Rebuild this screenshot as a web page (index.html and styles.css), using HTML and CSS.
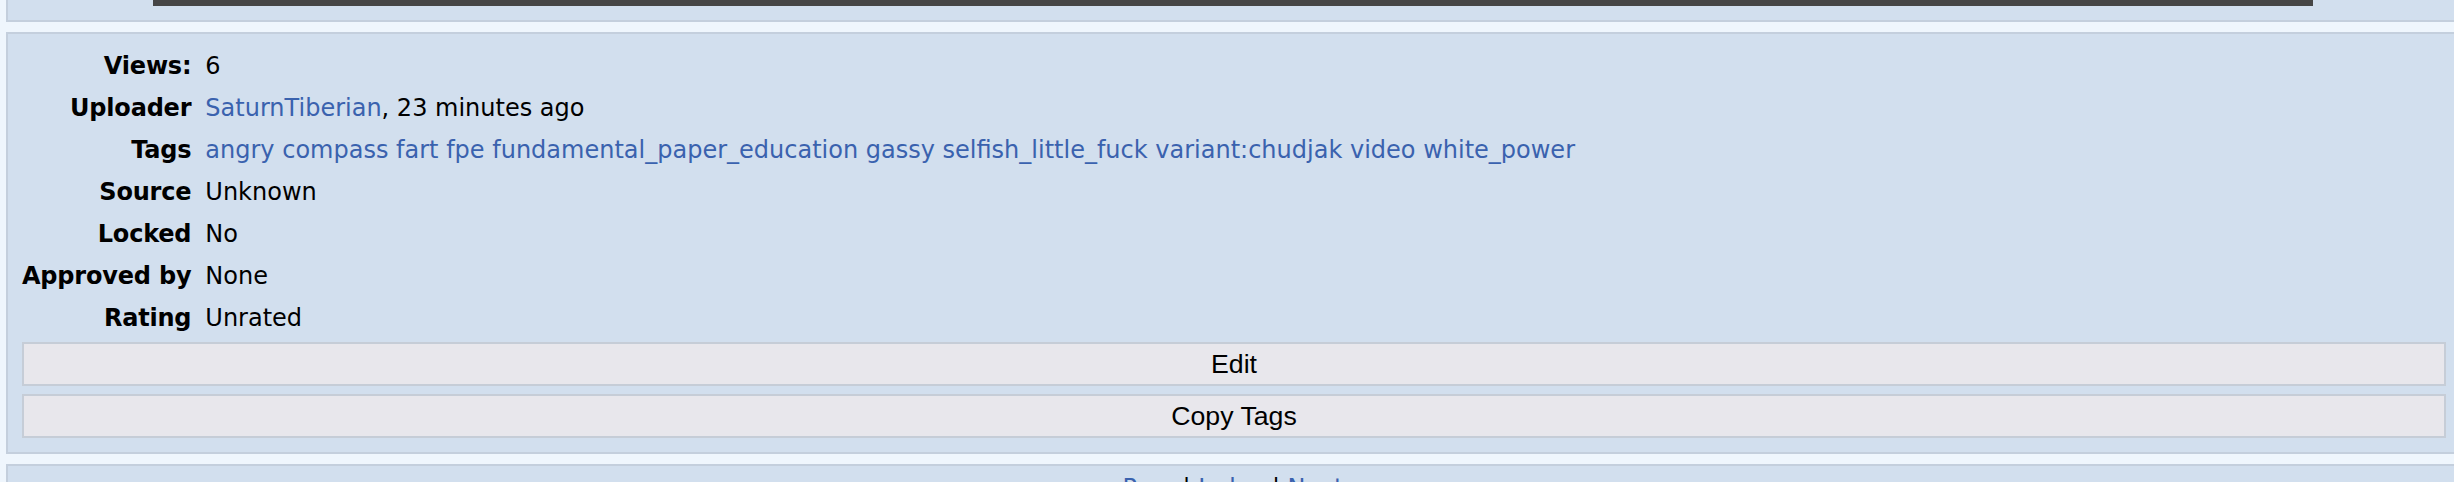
FILE: index.html
```html
<!DOCTYPE html>
<html>
<head>
<meta charset="utf-8">
<title>Post</title>
<link rel="stylesheet" href="styles.css">
</head>
<body>
<div class="page">
  <section class="block block-media">
    <div class="player"></div>
  </section>
  <section class="block block-info">
    <table class="info">
      <tr><th>Views:</th><td>6</td></tr>
      <tr><th>Uploader</th><td><a href="#">SaturnTiberian</a>, 23 minutes ago</td></tr>
      <tr><th>Tags</th><td><a href="#">angry</a> <a href="#">compass</a> <a href="#">fart</a> <a href="#">fpe</a> <a href="#">fundamental_paper_education</a> <a href="#">gassy</a> <a href="#">selfish_little_fuck</a> <a href="#">variant:chudjak</a> <a href="#">video</a> <a href="#">white_power</a></td></tr>
      <tr><th>Source</th><td>Unknown</td></tr>
      <tr><th>Locked</th><td>No</td></tr>
      <tr><th>Approved by</th><td>None</td></tr>
      <tr><th>Rating</th><td>Unrated</td></tr>
    </table>
    <div class="actions">
      <button type="button" class="btn">Edit</button>
      <button type="button" class="btn">Copy Tags</button>
    </div>
  </section>
  <section class="block block-nav">
    <div class="nav"><a href="#">Prev</a> | <a href="#">Index</a> | <a href="#">Next</a></div>
  </section>
</div>
</body>
</html>
```
FILE: styles.css
```css
html, body {
  margin: 0;
  padding: 0;
  overflow: hidden;
  background: #eff6fd;
}

.page {
  padding-left: 6px;
  width: 2454px;
  display: flex;
  flex-direction: column;
  gap: 10px;
  font-family: "DejaVu Sans", Verdana, sans-serif;
  font-size: 24px;
  color: #000;
}

.block {
  box-sizing: border-box;
  width: 2454px;
  background: #d2dfee;
  border: 2px solid #c4cfdd;
}

.block-media {
  border-top: none;
  padding: 0 0 14px;
}

.player {
  width: 2160px;
  height: 6px;
  margin: 0 auto;
  background: #464646;
}

.block-info {
  padding: 11px 12px 14px 14px;
}

.info {
  border-collapse: collapse;
  margin-bottom: 3px;
}

.info th {
  width: 1px;
  height: 42px;
  padding: 0;
  text-align: right;
  font-weight: bold;
  white-space: nowrap;
  letter-spacing: -0.2px;
}

.info td {
  padding: 0 0 0 14px;
  white-space: nowrap;
}

a {
  color: #3a62ae;
  text-decoration: none;
}

.actions {
  display: flex;
  flex-direction: column;
  gap: 8px;
}

.btn {
  width: 100%;
  height: 44px;
  padding: 0;
  background: #e8e7ec;
  border: 2px solid #c6cdd7;
  font-family: "Liberation Sans", Arial, sans-serif;
  font-size: 26.67px;
  color: #000;
}

.block-nav {
  height: 40px;
  text-align: center;
  line-height: 44px;
}
```
